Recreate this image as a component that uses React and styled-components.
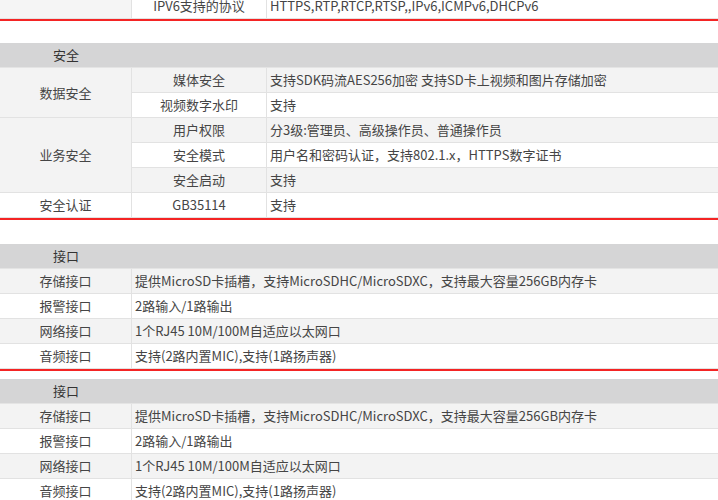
import React from "react";
import styled, { createGlobalStyle } from "styled-components";

const GlobalStyle = createGlobalStyle`
  html, body {
    margin: 0;
    padding: 0;
    background: #fff;
  }
  body {
    font-family: "Noto Sans CJK SC", "Noto Sans", sans-serif;
    overflow: hidden;
  }
`;

const Page = styled.div`
  width: 718px;
  margin-top: -6px;
`;

const Spec = styled.table`
  width: 100%;
  table-layout: fixed;
  border-collapse: separate;
  border-spacing: 0;
  border-bottom: 2px solid #f42424;
  margin-top: ${(p) => p.$gap || 0}px;
  font-size: 13px;
  color: #454545;
`;

const Col = styled.col`
  width: ${(p) => (p.$w ? `${p.$w}px` : "auto")};
`;

const HeadRow = styled.tr`
  background: #d5d5d6;
`;

const HeadCell = styled.th`
  padding: 0;
  font-weight: normal;
  text-align: center;
  line-height: 24px;
  color: #333;
  border-bottom: 1px solid #e4e4e4;
`;

const Row = styled.tr`
  background: ${(p) => (p.$shade ? "#f3f3f3" : "#fff")};
`;

const Cell = styled.td`
  padding: 0 ${(p) => (p.$center ? 0 : 3)}px;
  text-align: ${(p) => (p.$center ? "center" : "left")};
  line-height: 24px;
  white-space: nowrap;
  overflow: hidden;
  border-bottom: 1px solid #e2e2e2;
  border-right: 1px solid #e2e2e2;
  background: ${(p) => p.$bg || "transparent"};
  &:last-child {
    border-right: none;
  }
`;

const ports = [
  ["存储接口", "提供MicroSD卡插槽，支持MicroSDHC/MicroSDXC，支持最大容量256GB内存卡"],
  ["报警接口", "2路输入/1路输出"],
  ["网络接口", "1个RJ45 10M/100M自适应以太网口"],
  ["音频接口", "支持(2路内置MIC),支持(1路扬声器)"],
];

const PortTable = ({ gap }) => (
  <Spec $gap={gap}>
    <colgroup>
      <Col $w={132} />
      <Col />
    </colgroup>
    <thead>
      <HeadRow>
        <HeadCell>接口</HeadCell>
        <HeadCell />
      </HeadRow>
    </thead>
    <tbody>
      {ports.map(([name, value], i) => (
        <Row key={name} $shade={i % 2 === 0}>
          <Cell $center>{name}</Cell>
          <Cell>{value}</Cell>
        </Row>
      ))}
    </tbody>
  </Spec>
);

export default function App() {
  return (
    <Page>
      <GlobalStyle />

      {/* tail of the network table, cut off by the screenshot */}
      <Spec>
        <colgroup>
          <Col $w={132} />
          <Col $w={135} />
          <Col />
        </colgroup>
        <tbody>
          <Row>
            <Cell $center $bg="#f5f5f5" />
            <Cell $center>IPV6支持的协议</Cell>
            <Cell>HTTPS,RTP,RTCP,RTSP,,IPv6,ICMPv6,DHCPv6</Cell>
          </Row>
        </tbody>
      </Spec>

      <Spec $gap={22}>
        <colgroup>
          <Col $w={132} />
          <Col $w={135} />
          <Col />
        </colgroup>
        <thead>
          <HeadRow>
            <HeadCell>安全</HeadCell>
            <HeadCell colSpan={2} />
          </HeadRow>
        </thead>
        <tbody>
          <Row $shade>
            <Cell $center rowSpan={2}>数据安全</Cell>
            <Cell $center>媒体安全</Cell>
            <Cell>支持SDK码流AES256加密 支持SD卡上视频和图片存储加密</Cell>
          </Row>
          <Row>
            <Cell $center>视频数字水印</Cell>
            <Cell>支持</Cell>
          </Row>
          <Row $shade>
            <Cell $center rowSpan={3}>业务安全</Cell>
            <Cell $center>用户权限</Cell>
            <Cell>分3级:管理员、高级操作员、普通操作员</Cell>
          </Row>
          <Row>
            <Cell $center>安全模式</Cell>
            <Cell>用户名和密码认证，支持802.1.x，HTTPS数字证书</Cell>
          </Row>
          <Row $shade>
            <Cell $center>安全启动</Cell>
            <Cell>支持</Cell>
          </Row>
          <Row>
            <Cell $center>安全认证</Cell>
            <Cell $center>GB35114</Cell>
            <Cell>支持</Cell>
          </Row>
        </tbody>
      </Spec>

      <PortTable gap={24} />
      <PortTable gap={8} />
    </Page>
  );
}
